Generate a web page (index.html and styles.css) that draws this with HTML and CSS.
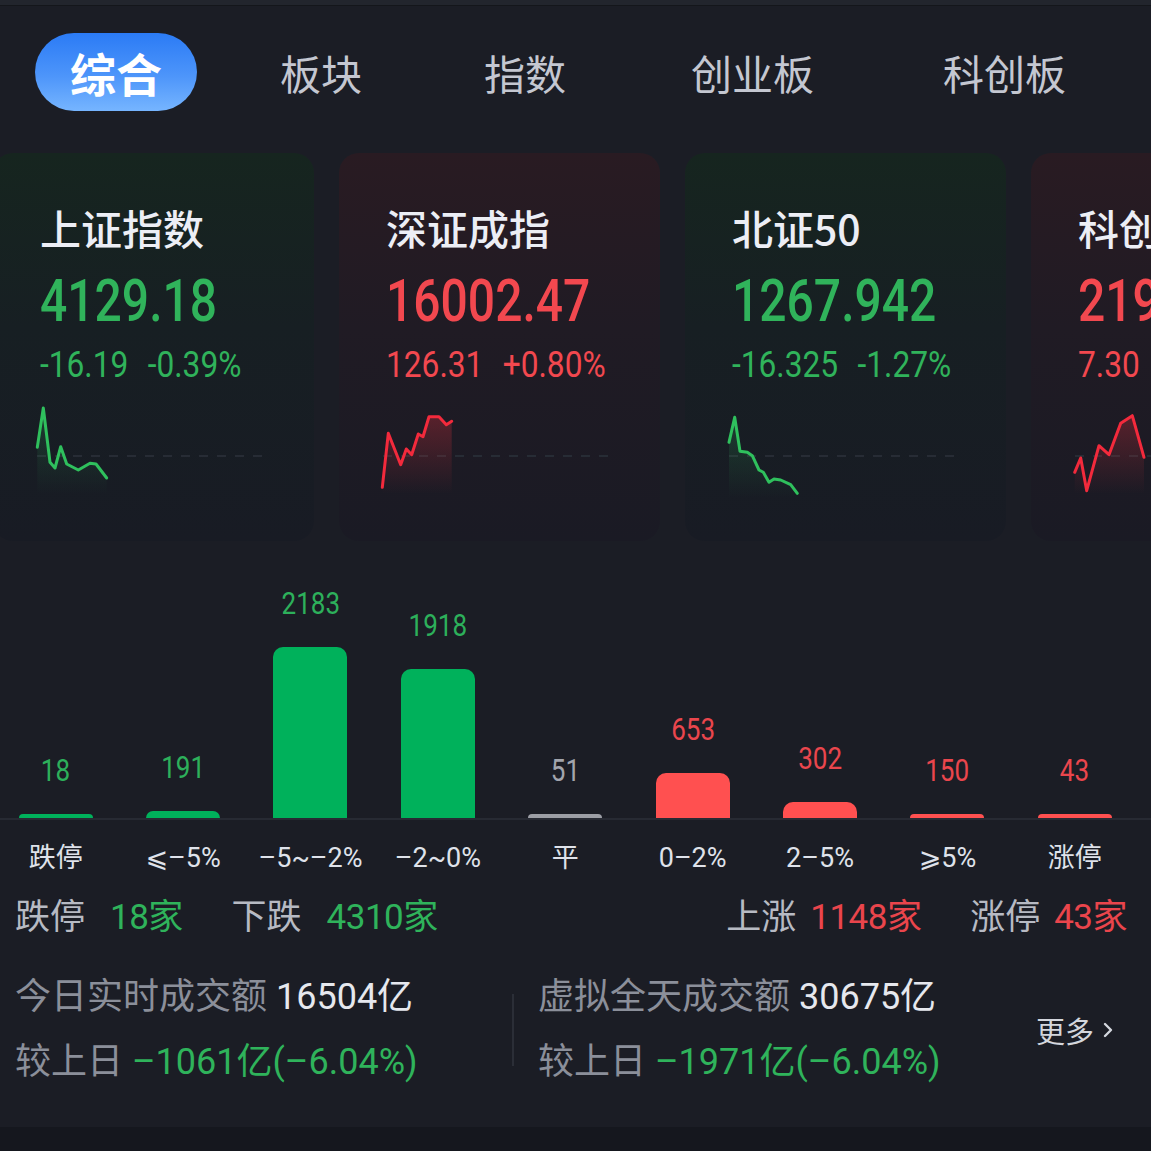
FILE: index.html
```html
<!DOCTYPE html>
<html lang="zh-CN">
<head>
<meta charset="utf-8">
<title>市场概览</title>
<link rel="stylesheet" href="styles.css">
</head>
<body>
<div class="topbar"></div>

<nav class="tabs">
  <div class="tab active">综合</div>
  <div class="tab">板块</div>
  <div class="tab">指数</div>
  <div class="tab">创业板</div>
  <div class="tab">科创板</div>
</nav>

<section class="cards">
  <div class="card down">
    <div class="card-title">上证指数</div>
    <div class="card-price"><span class="cond">4129.18</span></div>
    <div class="card-change"><span class="cond"><span>-16.19</span><span>-0.39%</span></span></div>
    <svg class="spark" width="321" height="110" viewBox="0 0 321 110">
      <defs>
        <linearGradient id="gfill" x1="0" y1="0" x2="0" y2="1">
          <stop offset="0" stop-color="#2fb35b" stop-opacity="0.22"/>
          <stop offset="1" stop-color="#2fb35b" stop-opacity="0"/>
        </linearGradient>
        <linearGradient id="rfill" x1="0" y1="0" x2="0" y2="1">
          <stop offset="0" stop-color="#f0323f" stop-opacity="0.28"/>
          <stop offset="1" stop-color="#f0323f" stop-opacity="0"/>
        </linearGradient>
      </defs>
      <line x1="44" y1="54" x2="270" y2="54" class="dash"/>
      <polygon class="fill-g" points="44.3,45.3 50.3,6 57,60.3 62,66 67.7,44.7 73.7,62 85.3,68 97,61.3 103,62 113.7,76 113.7,92 44.3,92"/>
      <polyline class="line-g" points="44.3,45.3 50.3,6 57,60.3 62,66 67.7,44.7 73.7,62 85.3,68 97,61.3 103,62 113.7,76"/>
    </svg>
  </div>

  <div class="card up">
    <div class="card-title">深证成指</div>
    <div class="card-price"><span class="cond">16002.47</span></div>
    <div class="card-change"><span class="cond"><span>126.31</span><span>+0.80%</span></span></div>
    <svg class="spark" width="321" height="110" viewBox="0 0 321 110">
      <line x1="44" y1="54" x2="270" y2="54" class="dash"/>
      <polygon class="fill-r" points="43.3,85.3 49.3,31.3 61.7,62.7 67.3,47 72.7,52.7 79.3,32 84,34.7 90,14.7 100,14.7 107.3,22.7 112.7,19.3 112.7,92 43.3,92"/>
      <polyline class="line-r" points="43.3,85.3 49.3,31.3 61.7,62.7 67.3,47 72.7,52.7 79.3,32 84,34.7 90,14.7 100,14.7 107.3,22.7 112.7,19.3"/>
    </svg>
  </div>

  <div class="card down">
    <div class="card-title">北证50</div>
    <div class="card-price"><span class="cond">1267.942</span></div>
    <div class="card-change"><span class="cond"><span>-16.325</span><span>-1.27%</span></span></div>
    <svg class="spark" width="321" height="110" viewBox="0 0 321 110">
      <line x1="44" y1="54" x2="270" y2="54" class="dash"/>
      <polygon class="fill-g" points="44,40.3 49.7,15.3 55,49.3 62.3,50.3 67.3,53.7 74,68 78.3,70.3 84,80.3 89,77 95.7,78 105.7,82.7 112.3,91.3 112.3,96 44,96"/>
      <polyline class="line-g" points="44,40.3 49.7,15.3 55,49.3 62.3,50.3 67.3,53.7 74,68 78.3,70.3 84,80.3 89,77 95.7,78 105.7,82.7 112.3,91.3"/>
    </svg>
  </div>

  <div class="card up">
    <div class="card-title">科创50</div>
    <div class="card-price"><span class="cond">2197.35</span></div>
    <div class="card-change"><span class="cond"><span>7.30</span><span>+0.33%</span></span></div>
    <svg class="spark" width="321" height="110" viewBox="0 0 321 110">
      <line x1="44" y1="54" x2="270" y2="54" class="dash"/>
      <polygon class="fill-r" points="43.7,70.3 49.7,56 55.7,88.7 68,43.7 78,52.7 89.7,21.3 101.3,13.7 113,55.3 113,92 43.7,92"/>
      <polyline class="line-r" points="43.7,70.3 49.7,56 55.7,88.7 68,43.7 78,52.7 89.7,21.3 101.3,13.7 113,55.3"/>
    </svg>
  </div>
</section>

<section class="chart">
  <div class="col g"><span class="num">18</span><div class="bar" style="height:4px"></div></div>
  <div class="col g"><span class="num">191</span><div class="bar" style="height:7px"></div></div>
  <div class="col g"><span class="num">2183</span><div class="bar" style="height:171px"></div></div>
  <div class="col g"><span class="num">1918</span><div class="bar" style="height:149px"></div></div>
  <div class="col n"><span class="num">51</span><div class="bar" style="height:4px"></div></div>
  <div class="col r"><span class="num">653</span><div class="bar" style="height:45px"></div></div>
  <div class="col r"><span class="num">302</span><div class="bar" style="height:16px"></div></div>
  <div class="col r"><span class="num">150</span><div class="bar" style="height:4px"></div></div>
  <div class="col r"><span class="num">43</span><div class="bar" style="height:4px"></div></div>
</section>
<div class="chart-labels">
  <span>跌停</span><span>⩽–5%</span><span>–5~–2%</span><span>–2~0%</span><span>平</span><span>0–2%</span><span>2–5%</span><span>⩾5%</span><span>涨停</span>
</div>

<section class="summary">
  <div class="sum-group">
    <span class="lbl">跌停</span><span class="val green">18家</span>
    <span class="lbl sp">下跌</span><span class="val green">4310家</span>
  </div>
  <div class="sum-group">
    <span class="lbl">上涨</span><span class="val red tight">1148家</span>
    <span class="lbl sp">涨停</span><span class="val red tight">43家</span>
  </div>
</section>

<section class="amounts">
  <div class="amt-col left">
    <div class="amt-line"><span class="lbl2">今日实时成交额</span> <span class="v">16504亿</span></div>
    <div class="amt-line"><span class="lbl2">较上日</span> <span class="green">–1061亿(–6.04%)</span></div>
  </div>
  <div class="divider"></div>
  <div class="amt-col right">
    <div class="amt-line"><span class="lbl2">虚拟全天成交额</span> <span class="v">30675亿</span></div>
    <div class="amt-line"><span class="lbl2">较上日</span> <span class="green">–1971亿(–6.04%)</span></div>
  </div>
  <div class="more">更多<svg width="12" height="20" viewBox="0 0 12 20"><polyline points="3,4 9,10 3,16" fill="none" stroke="#d3d6dd" stroke-width="2.4" stroke-linecap="round" stroke-linejoin="round"/></svg></div>
</section>

<div class="band"></div>
</body>
</html>
```

FILE: styles.css
```css
html, body {
  margin: 0;
  padding: 0;
}
body {
  width: 1151px;
  height: 1151px;
  overflow: hidden;
  background: #1b1d25;
  font-family: Roboto, "Noto Sans CJK SC", sans-serif;
  color: #e6e8ee;
}

.topbar {
  height: 5px;
  background: #22252d;
  border-bottom: 1px solid #14161b;
}

/* Tabs */
.tabs {
  display: flex;
  align-items: center;
  gap: 48px;
  padding-left: 35px;
  margin-top: 27px;
  height: 78px;
}
.tab {
  padding: 0 35px;
  font-family: "Noto Sans CJK SC", sans-serif;
  font-size: 41px;
  line-height: 78px;
  color: #c4c7d1;
  white-space: nowrap;
}
.tab:nth-child(3) { margin-left: 4px; }
.tab:nth-child(4) { margin-left: 7px; }
.tab:nth-child(5) { margin-left: 11px; }
.tab.active {
  height: 78px;
  border-radius: 39px;
  background: linear-gradient(180deg, #2b7bf5 0%, #4d95fa 55%, #76b5ff 100%);
  color: #ffffff;
  font-size: 46px;
  font-weight: 700;
}

/* Cards */
.cards {
  display: flex;
  gap: 25px;
  margin-top: 42px;
  margin-left: -7px;
}
.card {
  flex: 0 0 321px;
  width: 321px;
  min-width: 0;
  overflow: hidden;
  height: 388px;
  box-sizing: border-box;
  border-radius: 20px;
  padding: 50px 0 0 47px;
}
.card.down {
  background: linear-gradient(180deg, #16251f 0%, #171f23 45%, #181b24 100%);
}
.card.up {
  background: linear-gradient(180deg, #291b22 0%, #201b24 45%, #1a1a24 100%);
}
.card-title {
  font-family: "Noto Sans CJK SC", sans-serif;
  font-size: 41px;
  line-height: 48px;
  font-weight: 500;
  color: #eceef5;
  white-space: nowrap;
}
.cond {
  display: inline-block;
  transform-origin: 0 50%;
  white-space: nowrap;
}
.card-price {
  margin-top: 18px;
  font-family: Roboto, sans-serif;
  font-size: 60px;
  line-height: 64px;
  font-weight: 500;
  white-space: nowrap;
}
.card-price .cond { transform: scaleX(0.8); }
.card-change {
  margin-top: 12px;
  font-family: Roboto, sans-serif;
  font-size: 36px;
  line-height: 40px;
  white-space: nowrap;
}
.card-change .cond { transform: scaleX(0.88); }
.card-change .cond span + span { margin-left: 22px; }
.card.down .card-price, .card.down .card-change { color: #30b35b; }
.card.up .card-price, .card.up .card-change { color: #f2484f; }

.spark {
  display: block;
  margin-top: 17px;
  margin-left: -47px;
}
.spark .dash {
  stroke: #272c35;
  stroke-width: 2;
  stroke-dasharray: 9 9;
}
.line-g, .line-r {
  fill: none;
  stroke-width: 3;
  stroke-linejoin: round;
  stroke-linecap: round;
}
.line-g { stroke: #2fc05d; }
.line-r { stroke: #f32a3c; }
.fill-g { fill: url(#gfill); }
.fill-r { fill: url(#rfill); }

/* Chart */
.chart {
  display: grid;
  grid-template-columns: repeat(9, 127.4px);
  margin-left: -8px;
  margin-top: 19px;
  height: 258px;
  border-bottom: 2px solid #272a33;
}
.col {
  display: flex;
  flex-direction: column;
  justify-content: flex-end;
  align-items: center;
}
.num {
  display: inline-block;
  font-family: Roboto, sans-serif;
  font-size: 31px;
  line-height: 32px;
  margin-bottom: 27px;
  transform: scaleX(0.84);
}
.bar {
  width: 74px;
  border-radius: 10px 10px 0 0;
}
.col.g .num { color: #2db05b; }
.col.g .bar { background: #00b15b; }
.col.n .num { color: #a2a5ad; }
.col.n .bar { background: #9c9ea5; }
.col.r .num { color: #ea464d; }
.col.r .bar { background: #ff5050; }

.chart-labels {
  display: grid;
  grid-template-columns: repeat(9, 127.4px);
  margin-left: -8px;
  margin-top: 18px;
  font-family: Roboto, "Noto Sans CJK SC", "DejaVu Sans", sans-serif;
  font-size: 27px;
  line-height: 40px;
  color: #dfe2ea;
  text-align: center;
  white-space: nowrap;
}

/* Summary */
.summary {
  display: flex;
  justify-content: space-between;
  padding: 0 24px 0 15px;
  margin-top: 18px;
  font-size: 35px;
  line-height: 44px;
  white-space: nowrap;
}
.lbl { color: #b7bac3; }
.val { margin-left: 25px; letter-spacing: -0.5px; }
.val.tight { margin-left: 14px; }
.lbl.sp { margin-left: 40px; }
.green { color: #2fb35b; }
.red { color: #ea454c; }

/* Amounts */
.amounts {
  display: flex;
  align-items: center;
  margin-top: 25px;
  font-size: 36px;
  line-height: 65px;
  white-space: nowrap;
}
.amt-col.left {
  width: 497px;
  padding-left: 15px;
}
.amt-col.right {
  padding-left: 24px;
}
.lbl2 { color: #8b8f9a; }
.v { color: #e6e8ee; }
.divider {
  width: 2px;
  height: 72px;
  background: #2b2e37;
}
.more {
  margin-left: auto;
  margin-right: 37px;
  display: flex;
  align-items: center;
  gap: 8px;
  font-family: "Noto Sans CJK SC", sans-serif;
  font-size: 29px;
  line-height: 40px;
  color: #d3d6dd;
}
.more svg { display: block; }

.band {
  margin-top: 32px;
  height: 40px;
  background: #15171e;
}
```
